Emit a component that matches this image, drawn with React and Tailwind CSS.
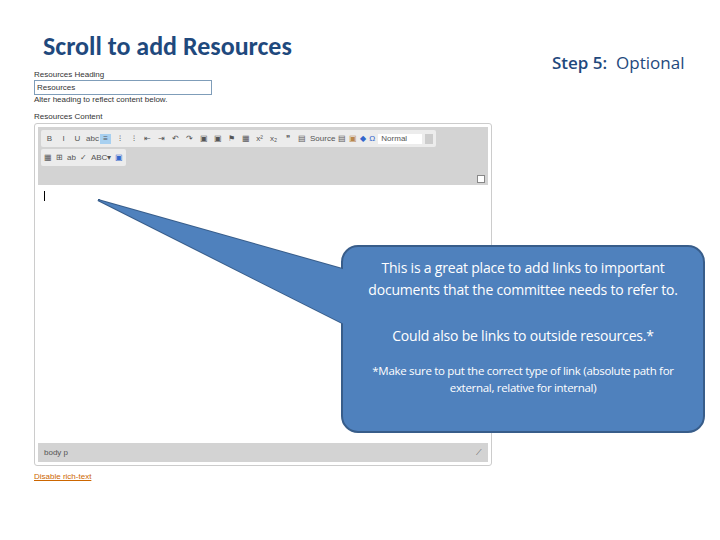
const TB1 = ['B','I','U','abc','≡','⁝','⁝','⇤','⇥','↶','↷','▣','▣','⚑','▦','x²','x₂','❞','▤'];

export default function App() {
  return (
    <div className="relative w-[720px] h-[540px] bg-white overflow-hidden" style={{ fontFamily: '"Liberation Sans", Arial, sans-serif' }}>
      <div className="absolute left-[43px] top-[27px] text-[26px] text-[#1f497d] font-semibold" style={{ fontFamily: 'Calibri, Carlito, "Open Sans", sans-serif' }}>Scroll to add Resources</div>
      <div className="absolute left-[552px] top-[50px] text-[17px] text-[#1f497d]" style={{ fontFamily: '"Open Sans", sans-serif' }}><b className="font-semibold">Step 5:</b>&nbsp; Optional</div>

      <div className="absolute left-[34px] top-[70px] w-[460px] text-[8px] leading-[10px] text-[#333]">
        <div>Resources Heading</div>
        <div className="w-[178px] h-[15px] border border-[#7f9db9] px-[2px] leading-[13px]">Resources</div>
        <div>Alter heading to reflect content below.</div>
        <div className="mt-[7px]">Resources Content</div>
        <div className="mt-[1px] w-[458px] h-[343px] border border-[#ccc] rounded-[3px] p-[3px] flex flex-col">
          <div className="bg-[#d3d3d3] h-[58px] px-[3px] pt-[3px] flex flex-col gap-[2px] relative">
            <div className="flex items-center gap-[3px] bg-[#ececec] w-fit px-[3px] h-[17px] rounded-[2px] text-[8px] text-[#555]">
              {TB1.map((t, i) => <span key={i} className={`w-[11px] text-center ${i===4?'bg-[#a8d0f0]':''}`}>{t}</span>)}
              <span>Source</span><span>▤</span><span className="text-[#b8864b]">▣</span><span className="text-[#36c]">◆</span><span className="text-[#36c]">Ω</span>
              <span className="bg-white px-[3px] w-[44px]">Normal</span><span className="bg-[#ccc] w-[8px] h-[10px]" />
            </div>
            <div className="flex items-center gap-[4px] bg-[#ececec] w-fit px-[3px] h-[17px] rounded-[2px] text-[8px] text-[#555]">
              <span>▦</span><span>⊞</span><span>ab</span><span>✓</span><span>ABC▾</span><span className="text-[#36c]">▣</span>
            </div>
            <div className="absolute right-[3px] bottom-[2px] w-[8px] h-[8px] border border-[#888] bg-white" />
          </div>
          <div className="flex-1 bg-white relative"><div className="absolute left-[6px] top-[6px] w-px h-[10px] bg-black" /></div>
          <div className="bg-[#d3d3d3] h-[19px] px-[6px] flex items-center justify-between text-[#555]"><span>body p</span><span>⟋</span></div>
        </div>
        <div className="mt-[6px] text-[#c60] underline">Disable rich-text</div>
      </div>

      <svg className="absolute left-0 top-0" width="720" height="540">
        <path d="M98 200 L346 270 L346 325 Z" fill="#4f81bd" stroke="#385d8a" strokeWidth="2" />
        <rect x="342" y="246" width="362" height="186" rx="16" fill="#4f81bd" stroke="#385d8a" strokeWidth="2" />
        <path d="M98 200 L346 270 L346 325 Z" fill="#4f81bd" />
      </svg>
      <div className="absolute left-[344px] top-[257px] w-[358px] text-center text-white" style={{ fontFamily: '"Open Sans", sans-serif' }}>
        <div className="text-[14px] leading-[22px] px-[14px] tracking-[-0.2px]">This is a great place to add links to important documents that the committee needs to refer to.</div>
        <div className="text-[14px] mt-[24px] tracking-[-0.2px]">Could also be links to outside resources.*</div>
        <div className="text-[11.5px] leading-[17px] mt-[16px] px-[14px] tracking-[-0.3px]">*Make sure to put the correct type of link (absolute path for external, relative for internal)</div>
      </div>
    </div>
  );
}
